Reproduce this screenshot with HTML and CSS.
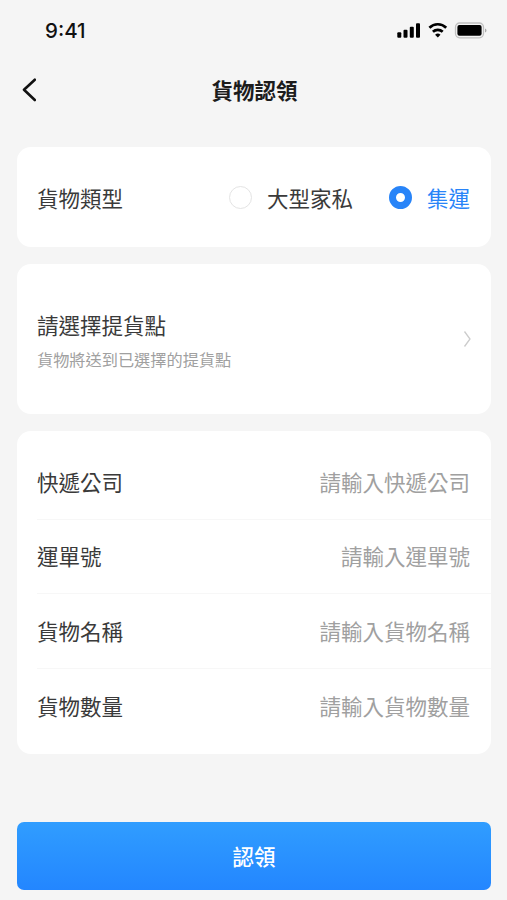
FILE: index.html
```html
<!DOCTYPE html>
<html lang="zh-Hant">
<head>
<meta charset="utf-8">
<title>貨物認領</title>
<link rel="stylesheet" href="styles.css">
</head>
<body>
<div class="status">
  <span class="time">9:41</span>
  <svg class="signals" width="92" height="20" viewBox="0 0 92 20">
    <rect x="1.300" y="12.300" width="4" height="5.500" rx="1"/>
    <rect x="7.500" y="9.800" width="4" height="8" rx="1"/>
    <rect x="13.800" y="6.700" width="4" height="11.100" rx="1"/>
    <rect x="20" y="3.200" width="4" height="14.600" rx="1"/>
    <path class="wave" d="M33.400 7.700a12 12 0 0 1 16.800 0M36.900 11.700a7.200 7.200 0 0 1 9.800 0"/>
    <path d="M39.100 14.700a4 4 0 0 1 5.400 0L41.800 17.600z"/>
    <rect class="case" x="59.500" y="3" width="28" height="14.800" rx="4.200"/>
    <rect x="61.400" y="5" width="24.200" height="10.800" rx="2"/>
    <path class="cap" d="M89 8.400v4c2-.8 2-3.200 0-4z"/>
  </svg>
</div>
<header class="nav">
  <svg class="back" width="16" height="26" viewBox="0 0 16 26"><path d="M14.800 2.700 4 12.700l10.800 10.300"/></svg>
  <h1>貨物認領</h1>
</header>
<main>
  <section class="card type">
    <span class="label">貨物類型</span>
    <span class="radio"></span><span class="option">大型家私</span>
    <span class="radio on"></span><span class="option chosen">集運</span>
  </section>
  <section class="card pickup">
    <div>
      <div class="label">請選擇提貨點</div>
      <div class="hint">貨物將送到已選擇的提貨點</div>
    </div>
    <svg class="chevron" width="8" height="18" viewBox="0 0 8 18"><path d="M1.500 1.500 7 9 1.500 16.500"/></svg>
  </section>
  <section class="card form">
    <div class="row"><span class="label">快遞公司</span><span class="placeholder">請輸入快遞公司</span></div>
    <div class="row"><span class="label">運單號</span><span class="placeholder">請輸入運單號</span></div>
    <div class="row"><span class="label">貨物名稱</span><span class="placeholder">請輸入貨物名稱</span></div>
    <div class="row"><span class="label">貨物數量</span><span class="placeholder">請輸入貨物數量</span></div>
  </section>
  <button class="submit">認領</button>
</main>
</body>
</html>
```

FILE: styles.css
```css
* { box-sizing: border-box; }
body {
  margin: 0;
  height: 900px;
  overflow: hidden;
  background: #f5f5f5;
  color: #3a3a3a;
  font: 21.5px/32px "Noto Sans CJK TC", sans-serif;
}
.status {
  display: flex;
  justify-content: space-between;
  align-items: center;
  height: 60px;
  padding: 0 19px 0 45px;
}
.time { padding-top: 2px; font: 500 20.5px/30px Inter, sans-serif; color: #111; }
.signals { fill: #000; }
.wave { fill: none; stroke: #000; stroke-width: 2.700; }
.case { fill: none; stroke: #c0c0c0; stroke-width: 1.300; }
.cap { fill: #aaa; }
.nav {
  display: grid;
  grid-template-columns: 40px 1fr 40px;
  align-items: center;
  height: 60px;
  padding: 0 19px 0 20px;
}
.back { fill: none; stroke: #111; stroke-width: 2.600; stroke-linecap: round; stroke-linejoin: round; }
h1 { margin: 0; padding-left: 1px; text-align: center; font-size: 21.5px; line-height: 32px; font-weight: 700; color: #1c1c1c; }
main { padding: 27px 16px 0 17px; }
.card { background: #fff; border-radius: 14px; margin-bottom: 17px; padding: 0 20px; }
.type { display: flex; align-items: center; height: 100px; padding: 1px 21px 0 20px; }
.type .label { margin-right: auto; }
.radio { width: 23px; height: 23px; border: 1.5px solid #e4e4e4; border-radius: 50%; margin-right: 15px; }
.radio.on { margin-left: 36px; border: 7px solid #2884f8; }
.chosen { color: #2884f8; }
.pickup { display: flex; align-items: center; justify-content: space-between; height: 150px; }
.pickup .label { padding-top: 1px; }
.hint { font-size: 16.2px; line-height: 24px; color: #a0a0a0; margin-top: 6px; }
.chevron { fill: none; stroke: #ccc; stroke-width: 1.300; }
.form { height: 323px; padding: 14px 0 0 20px; }
.row { display: flex; align-items: center; justify-content: space-between; height: 74.5px; padding-right: 21px; border-bottom: 1px solid #f7f7f7; }
.row:last-child { border: 0; }
.placeholder { color: #a0a0a0; }
.submit {
  display: block;
  width: 100%;
  height: 68px;
  margin-top: 68px;
  border: 0;
  border-radius: 7px;
  background: linear-gradient(#309dff, #2386ff);
  color: #fff;
  font: 500 21.5px/32px "Noto Sans CJK TC", sans-serif;
}
```
